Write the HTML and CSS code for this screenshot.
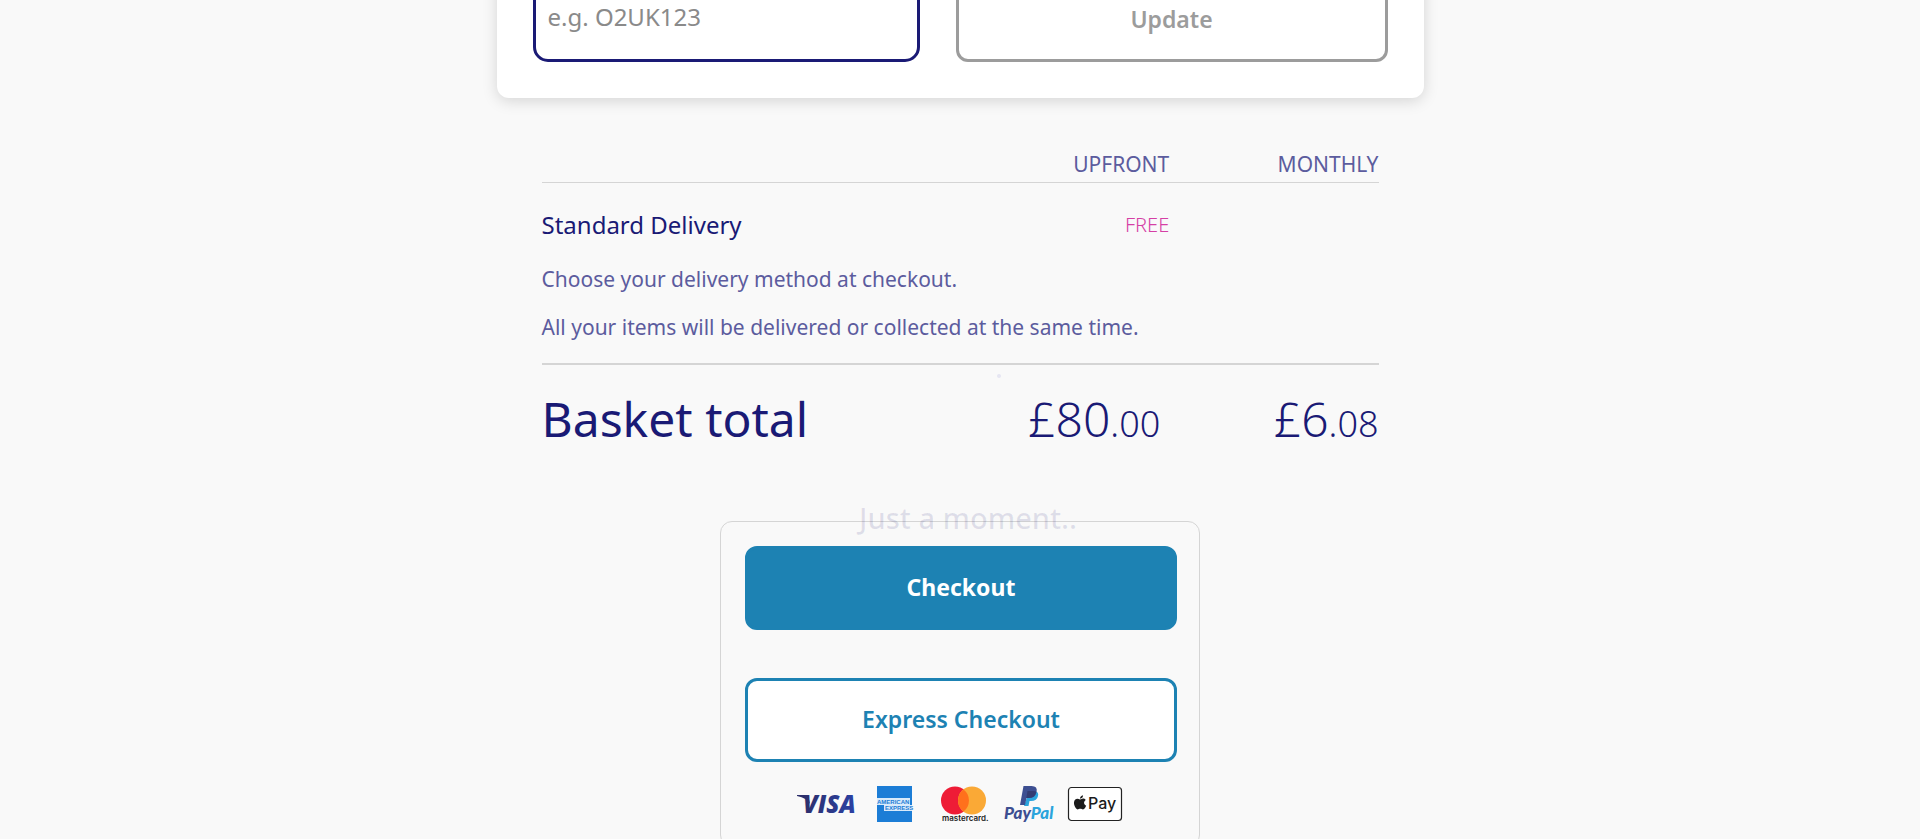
FILE: index.html
```html
<!DOCTYPE html>
<html lang="en">
<head>
<meta charset="utf-8">
<title>Basket</title>
<meta name="viewport" content="width=device-width, initial-scale=1">
<link rel="stylesheet" href="styles.css">
</head>
<body>
<main class="page">
  <form class="promo-card">
    <input class="promo-input" type="text" aria-label="Promotional code" placeholder="e.g. O2UK123">
    <button class="button button-disabled" type="button" disabled>Update</button>
  </form>

  <section class="summary">
    <table class="lines">
      <thead>
        <tr><th class="col-item" aria-label="Item"></th><th>UPFRONT</th><th>MONTHLY</th></tr>
      </thead>
      <tbody>
        <tr class="delivery"><td>Standard Delivery</td><td class="free">FREE</td><td></td></tr>
        <tr class="note"><td colspan="3">Choose your delivery method at checkout.</td></tr>
        <tr class="note note-last"><td colspan="3">All your items will be delivered or collected at the same time.</td></tr>
      </tbody>
      <tfoot>
        <tr class="total"><td>Basket total</td><td class="price price-upfront">£80<small>.00</small></td><td class="price">£6<small>.08</small></td></tr>
      </tfoot>
    </table>
    <span class="spinner-dot"></span>
  </section>

  <section class="checkout">
    <p class="loading">Just a moment..</p>
    <button class="button button-primary" type="button">Checkout</button>
    <button class="button button-outline" type="button">Express Checkout</button>
    <div class="payments">
      <svg viewBox="0 0 67 36" role="img" aria-label="Visa">
        <defs><linearGradient id="visa" x1="0" x2="1"><stop offset="0" stop-color="#2d2f6b"/><stop offset="1" stop-color="#2b41a4"/></linearGradient></defs>
        <path d="M3 9h8q3 0 3.500 2l1.500 7q-3-6-13-8z" fill="#2d2f6b"/>
        <text x="9" y="27" font-size="24" class="logo-visa" fill="url(#visa)">VISA</text>
      </svg>
      <svg viewBox="0 0 67 36" role="img" aria-label="American Express">
        <rect x="16" width="35" height="36" fill="#1c7dd6"/>
        <path d="M16 12h33v7h2v6H23v-6h-7z" fill="#d9eafa"/>
        <text x="16" y="18" font-size="6" class="logo-amex">AMERICAN</text>
        <text x="24" y="24" font-size="6" class="logo-amex">EXPRESS</text>
      </svg>
      <svg viewBox="0 0 67 36" role="img" aria-label="Mastercard">
        <circle cx="27" cy="14.500" r="14" fill="#ee1c36"/>
        <circle cx="44" cy="14.500" r="14" fill="#faa936"/>
        <path d="M35.500 3.400a14 14 0 0 1 0 22.200a14 14 0 0 1 0-22.200z" fill="#ff701c"/>
        <text x="14" y="35" font-size="8" class="logo-mc">mastercard.</text>
      </svg>
      <svg viewBox="0 0 67 36" role="img" aria-label="PayPal">
        <path d="M34 5h6.500q3.500 1.500 2.500 5q-1 5-7 5h-1.500l-1 5h-4.500z" fill="#2ba4dc"/>
        <path d="M28.500 0h8q6.500 0 5 6q-1.200 6-7.500 6h-2.500l-1.500 7h-5z" fill="#3d4f91"/>
        <path d="M32.500 5h6q2 0 2.700.8q-.8 6.200-7.200 6.200h-2.700z" fill="#333c72"/>
        <text x="9" y="33" font-size="17" class="logo-pp" fill="#3d4f91">Pay<tspan fill="#2ba4dc">Pal</tspan></text>
      </svg>
      <svg viewBox="0 0 67 36" role="img" aria-label="Apple Pay">
        <rect x="6.500" y="1.500" width="53" height="33" rx="3" fill="#fff" stroke="#222" stroke-width="1.200"/>
        <path d="M18 13.500c1-.1 2-1 3-1s2 .4 2.700 1.400c-2.400 1.500-2 4.700.5 5.700c-.7 2-1.900 3.800-3.200 3.800c-1 0-1.500-.6-2.700-.6s-1.800.6-2.700.6c-2 0-5.600-6.600-2.300-9.800c1.800-1.600 3.500-.3 4.700-.1zM18 12.700c-.1-1.700 1.300-3.200 3-3.400c.2 1.800-1.200 3.400-3 3.400z" fill="#1b1b1b"/>
        <text x="26" y="23" font-size="16" class="logo-apple">Pay</text>
      </svg>
    </div>
  </section>
</main>
</body>
</html>
```
FILE: styles.css
```css
* { box-sizing: border-box; }

body {
  margin: 0;
  overflow: hidden;
  background: #f9f9f9;
  color: #1a1a75;
  font-family: "Noto Sans", "Open Sans", sans-serif;
  font-size: 24px;
}

/* The basket is shown scrolled down to its totals. */
.page {
  max-width: 927px;
  margin: -58px auto 0;
}

.promo-card {
  display: grid;
  grid-template-columns: 387fr 432fr;
  gap: 36px;
  padding: 36px;
  border-radius: 12px;
  background: #fff;
  box-shadow: 0 3px 15px rgba(0, 0, 0, 0.15);
}

.promo-input {
  width: 100%;
  height: 84px;
  padding: 0 12px 8px;
  border: 3px solid #1a1a75;
  border-radius: 15px;
  background: #fff;
  font: inherit;
}

.promo-input::placeholder { color: #8a8a8a; }

.button {
  display: block;
  width: 100%;
  height: 84px;
  padding: 0 0 2px;
  border: 3px solid;
  border-radius: 12px;
  background: #fff;
  font: inherit;
  font-size: 23px;
  font-weight: 600;
}

.button-disabled { border-color: #9c9c9c; color: #9c9c9c; }
.button-primary { border-color: #1d82b3; background: #1d82b3; color: #fff; font-weight: 700; }
.button-outline { margin-top: 48px; border-color: #1d82b3; color: #1d82b3; }

.summary {
  position: relative;
  padding: 48px 45px 0;
}

.lines {
  width: 100%;
  table-layout: fixed;
  border-collapse: collapse;
}

.lines th, .lines td { padding: 0; text-align: right; }
.lines .col-item { width: 50%; }
.lines td:first-child { text-align: left; }

.lines th {
  height: 36px;
  border-bottom: 1px solid #d5d5d5;
  color: #5c5c9e;
  font-size: 21px;
  font-weight: 400;
  line-height: 30px;
}

.delivery td { height: 85px; line-height: 32px; }
.lines .free { color: #d53fa5; font-size: 20px; font-weight: 300; }

.note td {
  height: 48px;
  padding-bottom: 24px;
  color: #5c5c9e;
  font-size: 21px;
  line-height: 24px;
}

.note-last { border-bottom: 2px solid #d5d5d5; }

.total td { height: 108px; padding-top: 24px; font-size: 48px; line-height: 60px; vertical-align: baseline; }
.total .price { font-weight: 300; }
.total .price-upfront { padding-right: 9px; }
.price small { font-size: 36px; }

.spinner-dot {
  position: absolute;
  top: 276px;
  left: 500px;
  width: 4px;
  height: 4px;
  border-radius: 50%;
  background: #e6e6f2;
}

.checkout {
  position: relative;
  max-width: 480px;
  margin: 49px auto 0;
  padding: 24px 22px 24px 24px;
  border: 1px solid #d5d5d5;
  border-radius: 12px;
}

.loading {
  position: absolute;
  top: -24px;
  left: 0;
  width: 100%;
  margin: 0;
  padding-left: 16px;
  color: rgba(26, 26, 117, 0.12);
  font-size: 29px;
  font-weight: 500;
  line-height: 40px;
  text-align: center;
}

.payments {
  display: flex;
  justify-content: center;
  margin-top: 24px;
}

.payments svg { width: 67px; height: 36px; }

.logo-visa { font-family: "Open Sans", sans-serif; font-style: italic; font-weight: 800; }
.logo-amex { font-family: "Liberation Sans", sans-serif; font-weight: 700; fill: #1c7dd6; }
.logo-mc { font-family: Inter, sans-serif; font-weight: 600; fill: #222; }
.logo-pp { font-family: Lato, sans-serif; font-style: italic; font-weight: 900; }
.logo-apple { font-family: Inter, sans-serif; font-weight: 500; fill: #1b1b1b; }
```
